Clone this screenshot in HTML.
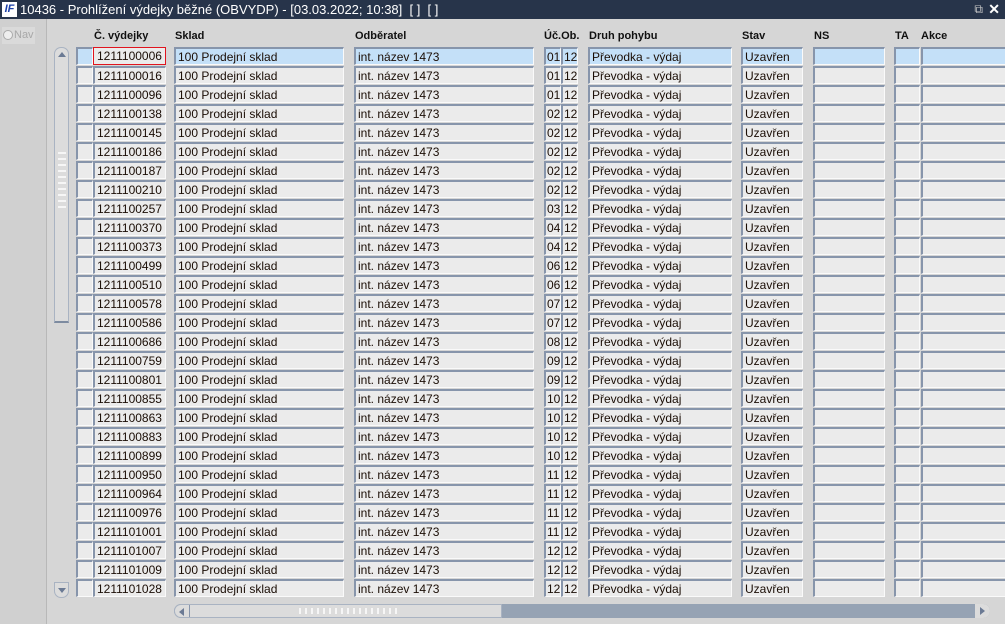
<!DOCTYPE html>
<html><head><meta charset="utf-8"><style>
*{margin:0;padding:0;box-sizing:border-box}
body{width:1005px;height:624px;overflow:hidden;background:#d6d6d6;font-family:"Liberation Sans",Arial,sans-serif;font-size:12px;color:#1a0d05;position:relative}
.tb{position:absolute;left:0;top:0;width:1005px;height:19px;background:#27344a;color:#fff;font-size:13px;line-height:19px}
.lp{position:absolute;left:0;top:19px;width:47px;height:605px;background:#d0d0d0;border-right:1px solid #b8b8b8}
.h{position:absolute;top:30px;font-weight:bold;font-size:11px;color:#111}
.r{position:absolute;left:0;height:18px;width:1005px}
.r div{position:absolute;top:0;height:18px;background:#ebebeb;border-top:2px solid #8795ab;border-left:2px solid #8795ab;border-right:1px solid #fafafa;border-bottom:1px solid #fafafa;line-height:16px;padding-left:2px;white-space:nowrap;overflow:hidden}
.s div{background:#c4e0f8}
.a{left:76px;width:17px}.b{left:93px;width:73px}.c{left:174px;width:170px}.d{left:354px;width:180px}.r .e{left:544px;width:17px;padding-left:1px}.r .f{left:561px;width:17px;padding-left:1px}.g{left:588px;width:144px}.i{left:741px;width:62px}.j{left:813px;width:72px}.k{left:894px;width:26px}.l{left:921px;width:90px}
.s .b{border:1px solid #e0141e;background:#ebebeb;padding-left:3px;line-height:17px}
</style></head><body>
<div class="tb"><span style="display:inline-block;width:15px;height:15px;background:#fff;color:#1a3fa8;font-weight:bold;font-style:italic;font-size:11px;line-height:15px;text-align:center;margin:2px 3px 0 2px;vertical-align:top">IF</span>10436 - Prohlížení výdejky běžné (OBVYDP) - [03.03.2022; 10:38] &nbsp;[ ] &nbsp;[ ]
<span style="position:absolute;right:22px;top:0;font-size:12px;color:#ccc">⧉</span><span style="position:absolute;right:5px;top:0;font-size:14px;font-weight:bold">✕</span></div>
<div class="lp"><div style="position:absolute;left:2px;top:8px;width:33px;height:17px;background:#dadada;color:#a8a8a8;font-size:11px;line-height:17px;padding-left:12px">Nav<span style="position:absolute;left:1px;top:3px;width:10px;height:10px;border-radius:50%;border:1px solid #aaa;background:#eee"></span></div></div>
<div class="h" style="left:94px">Č. výdejky</div><div class="h" style="left:175px">Sklad</div><div class="h" style="left:355px">Odběratel</div><div class="h" style="left:544px">Úč.Ob.</div><div class="h" style="left:589px">Druh pohybu</div><div class="h" style="left:742px">Stav</div><div class="h" style="left:814px">NS</div><div class="h" style="left:895px">TA</div><div class="h" style="left:921px">Akce</div>
<div style="position:absolute;left:54px;top:47px;width:15px;height:276px;border:1px solid #a9b3c2;border-radius:7px 7px 0 0;background:#dcdcdc;border-bottom:2px solid #7d8ba0"><div style="margin:4px auto 0;width:0;height:0;border-left:4px solid transparent;border-right:4px solid transparent;border-bottom:5px solid #6b7a94"></div><div style="position:absolute;top:100px;left:3px;width:8px;height:60px;background:repeating-linear-gradient(#dcdcdc 0 4px,#f6f6f6 4px 6px)"></div></div>
<div style="position:absolute;left:54px;top:582px;width:15px;height:16px;border:1px solid #a9b3c2;border-radius:0 0 7px 7px;background:#dcdcdc"><div style="margin:5px auto 0;width:0;height:0;border-left:4px solid transparent;border-right:4px solid transparent;border-top:5px solid #6b7a94"></div></div>
<div style="position:absolute;left:174px;top:604px;width:816px;height:14px;background:#96a3b4;border-radius:7px"></div>
<div style="position:absolute;left:174px;top:604px;width:328px;height:14px;background:#dcdcdc;border:1px solid #a9b3c2;border-radius:7px 0 0 7px"><div style="position:absolute;left:4px;top:3px;width:0;height:0;border-top:4px solid transparent;border-bottom:4px solid transparent;border-right:5px solid #6b7a94"></div><div style="position:absolute;left:14px;top:0;width:1px;height:12px;background:#8795ab"></div><div style="position:absolute;left:120px;top:3px;width:105px;height:6px;background:repeating-linear-gradient(90deg,#dcdcdc 0 4px,#f6f6f6 4px 6px)"></div></div>
<div style="position:absolute;left:975px;top:604px;width:15px;height:14px;background:#dcdcdc;border-radius:0 7px 7px 0"><div style="position:absolute;left:5px;top:3px;width:0;height:0;border-top:4px solid transparent;border-bottom:4px solid transparent;border-left:5px solid #6b7a94"></div></div>

<div class="r s" style="top:47px"><div class="a"></div><div class="b">1211100006</div><div class="c">100 Prodejní sklad</div><div class="d">int. název 1473</div><div class="e">01</div><div class="f">12</div><div class="g">Převodka - výdaj</div><div class="i">Uzavřen</div><div class="j"></div><div class="k"></div><div class="l"></div></div>
<div class="r" style="top:66px"><div class="a"></div><div class="b">1211100016</div><div class="c">100 Prodejní sklad</div><div class="d">int. název 1473</div><div class="e">01</div><div class="f">12</div><div class="g">Převodka - výdaj</div><div class="i">Uzavřen</div><div class="j"></div><div class="k"></div><div class="l"></div></div>
<div class="r" style="top:85px"><div class="a"></div><div class="b">1211100096</div><div class="c">100 Prodejní sklad</div><div class="d">int. název 1473</div><div class="e">01</div><div class="f">12</div><div class="g">Převodka - výdaj</div><div class="i">Uzavřen</div><div class="j"></div><div class="k"></div><div class="l"></div></div>
<div class="r" style="top:104px"><div class="a"></div><div class="b">1211100138</div><div class="c">100 Prodejní sklad</div><div class="d">int. název 1473</div><div class="e">02</div><div class="f">12</div><div class="g">Převodka - výdaj</div><div class="i">Uzavřen</div><div class="j"></div><div class="k"></div><div class="l"></div></div>
<div class="r" style="top:123px"><div class="a"></div><div class="b">1211100145</div><div class="c">100 Prodejní sklad</div><div class="d">int. název 1473</div><div class="e">02</div><div class="f">12</div><div class="g">Převodka - výdaj</div><div class="i">Uzavřen</div><div class="j"></div><div class="k"></div><div class="l"></div></div>
<div class="r" style="top:142px"><div class="a"></div><div class="b">1211100186</div><div class="c">100 Prodejní sklad</div><div class="d">int. název 1473</div><div class="e">02</div><div class="f">12</div><div class="g">Převodka - výdaj</div><div class="i">Uzavřen</div><div class="j"></div><div class="k"></div><div class="l"></div></div>
<div class="r" style="top:161px"><div class="a"></div><div class="b">1211100187</div><div class="c">100 Prodejní sklad</div><div class="d">int. název 1473</div><div class="e">02</div><div class="f">12</div><div class="g">Převodka - výdaj</div><div class="i">Uzavřen</div><div class="j"></div><div class="k"></div><div class="l"></div></div>
<div class="r" style="top:180px"><div class="a"></div><div class="b">1211100210</div><div class="c">100 Prodejní sklad</div><div class="d">int. název 1473</div><div class="e">02</div><div class="f">12</div><div class="g">Převodka - výdaj</div><div class="i">Uzavřen</div><div class="j"></div><div class="k"></div><div class="l"></div></div>
<div class="r" style="top:199px"><div class="a"></div><div class="b">1211100257</div><div class="c">100 Prodejní sklad</div><div class="d">int. název 1473</div><div class="e">03</div><div class="f">12</div><div class="g">Převodka - výdaj</div><div class="i">Uzavřen</div><div class="j"></div><div class="k"></div><div class="l"></div></div>
<div class="r" style="top:218px"><div class="a"></div><div class="b">1211100370</div><div class="c">100 Prodejní sklad</div><div class="d">int. název 1473</div><div class="e">04</div><div class="f">12</div><div class="g">Převodka - výdaj</div><div class="i">Uzavřen</div><div class="j"></div><div class="k"></div><div class="l"></div></div>
<div class="r" style="top:237px"><div class="a"></div><div class="b">1211100373</div><div class="c">100 Prodejní sklad</div><div class="d">int. název 1473</div><div class="e">04</div><div class="f">12</div><div class="g">Převodka - výdaj</div><div class="i">Uzavřen</div><div class="j"></div><div class="k"></div><div class="l"></div></div>
<div class="r" style="top:256px"><div class="a"></div><div class="b">1211100499</div><div class="c">100 Prodejní sklad</div><div class="d">int. název 1473</div><div class="e">06</div><div class="f">12</div><div class="g">Převodka - výdaj</div><div class="i">Uzavřen</div><div class="j"></div><div class="k"></div><div class="l"></div></div>
<div class="r" style="top:275px"><div class="a"></div><div class="b">1211100510</div><div class="c">100 Prodejní sklad</div><div class="d">int. název 1473</div><div class="e">06</div><div class="f">12</div><div class="g">Převodka - výdaj</div><div class="i">Uzavřen</div><div class="j"></div><div class="k"></div><div class="l"></div></div>
<div class="r" style="top:294px"><div class="a"></div><div class="b">1211100578</div><div class="c">100 Prodejní sklad</div><div class="d">int. název 1473</div><div class="e">07</div><div class="f">12</div><div class="g">Převodka - výdaj</div><div class="i">Uzavřen</div><div class="j"></div><div class="k"></div><div class="l"></div></div>
<div class="r" style="top:313px"><div class="a"></div><div class="b">1211100586</div><div class="c">100 Prodejní sklad</div><div class="d">int. název 1473</div><div class="e">07</div><div class="f">12</div><div class="g">Převodka - výdaj</div><div class="i">Uzavřen</div><div class="j"></div><div class="k"></div><div class="l"></div></div>
<div class="r" style="top:332px"><div class="a"></div><div class="b">1211100686</div><div class="c">100 Prodejní sklad</div><div class="d">int. název 1473</div><div class="e">08</div><div class="f">12</div><div class="g">Převodka - výdaj</div><div class="i">Uzavřen</div><div class="j"></div><div class="k"></div><div class="l"></div></div>
<div class="r" style="top:351px"><div class="a"></div><div class="b">1211100759</div><div class="c">100 Prodejní sklad</div><div class="d">int. název 1473</div><div class="e">09</div><div class="f">12</div><div class="g">Převodka - výdaj</div><div class="i">Uzavřen</div><div class="j"></div><div class="k"></div><div class="l"></div></div>
<div class="r" style="top:370px"><div class="a"></div><div class="b">1211100801</div><div class="c">100 Prodejní sklad</div><div class="d">int. název 1473</div><div class="e">09</div><div class="f">12</div><div class="g">Převodka - výdaj</div><div class="i">Uzavřen</div><div class="j"></div><div class="k"></div><div class="l"></div></div>
<div class="r" style="top:389px"><div class="a"></div><div class="b">1211100855</div><div class="c">100 Prodejní sklad</div><div class="d">int. název 1473</div><div class="e">10</div><div class="f">12</div><div class="g">Převodka - výdaj</div><div class="i">Uzavřen</div><div class="j"></div><div class="k"></div><div class="l"></div></div>
<div class="r" style="top:408px"><div class="a"></div><div class="b">1211100863</div><div class="c">100 Prodejní sklad</div><div class="d">int. název 1473</div><div class="e">10</div><div class="f">12</div><div class="g">Převodka - výdaj</div><div class="i">Uzavřen</div><div class="j"></div><div class="k"></div><div class="l"></div></div>
<div class="r" style="top:427px"><div class="a"></div><div class="b">1211100883</div><div class="c">100 Prodejní sklad</div><div class="d">int. název 1473</div><div class="e">10</div><div class="f">12</div><div class="g">Převodka - výdaj</div><div class="i">Uzavřen</div><div class="j"></div><div class="k"></div><div class="l"></div></div>
<div class="r" style="top:446px"><div class="a"></div><div class="b">1211100899</div><div class="c">100 Prodejní sklad</div><div class="d">int. název 1473</div><div class="e">10</div><div class="f">12</div><div class="g">Převodka - výdaj</div><div class="i">Uzavřen</div><div class="j"></div><div class="k"></div><div class="l"></div></div>
<div class="r" style="top:465px"><div class="a"></div><div class="b">1211100950</div><div class="c">100 Prodejní sklad</div><div class="d">int. název 1473</div><div class="e">11</div><div class="f">12</div><div class="g">Převodka - výdaj</div><div class="i">Uzavřen</div><div class="j"></div><div class="k"></div><div class="l"></div></div>
<div class="r" style="top:484px"><div class="a"></div><div class="b">1211100964</div><div class="c">100 Prodejní sklad</div><div class="d">int. název 1473</div><div class="e">11</div><div class="f">12</div><div class="g">Převodka - výdaj</div><div class="i">Uzavřen</div><div class="j"></div><div class="k"></div><div class="l"></div></div>
<div class="r" style="top:503px"><div class="a"></div><div class="b">1211100976</div><div class="c">100 Prodejní sklad</div><div class="d">int. název 1473</div><div class="e">11</div><div class="f">12</div><div class="g">Převodka - výdaj</div><div class="i">Uzavřen</div><div class="j"></div><div class="k"></div><div class="l"></div></div>
<div class="r" style="top:522px"><div class="a"></div><div class="b">1211101001</div><div class="c">100 Prodejní sklad</div><div class="d">int. název 1473</div><div class="e">11</div><div class="f">12</div><div class="g">Převodka - výdaj</div><div class="i">Uzavřen</div><div class="j"></div><div class="k"></div><div class="l"></div></div>
<div class="r" style="top:541px"><div class="a"></div><div class="b">1211101007</div><div class="c">100 Prodejní sklad</div><div class="d">int. název 1473</div><div class="e">12</div><div class="f">12</div><div class="g">Převodka - výdaj</div><div class="i">Uzavřen</div><div class="j"></div><div class="k"></div><div class="l"></div></div>
<div class="r" style="top:560px"><div class="a"></div><div class="b">1211101009</div><div class="c">100 Prodejní sklad</div><div class="d">int. název 1473</div><div class="e">12</div><div class="f">12</div><div class="g">Převodka - výdaj</div><div class="i">Uzavřen</div><div class="j"></div><div class="k"></div><div class="l"></div></div>
<div class="r" style="top:579px"><div class="a"></div><div class="b">1211101028</div><div class="c">100 Prodejní sklad</div><div class="d">int. název 1473</div><div class="e">12</div><div class="f">12</div><div class="g">Převodka - výdaj</div><div class="i">Uzavřen</div><div class="j"></div><div class="k"></div><div class="l"></div></div>
</body></html>
